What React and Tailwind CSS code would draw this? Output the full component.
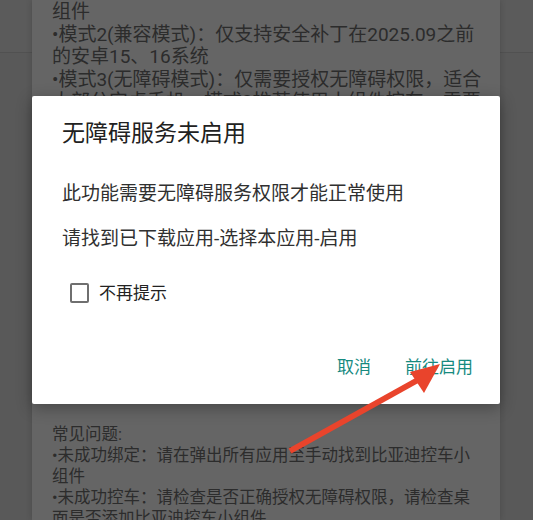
// Accessibility-service prompt shown over the mode/FAQ page (dimmed behind the dialog).

const topLines = [
  '组件',
  '•模式2(兼容模式)：仅支持安全补丁在2025.09之前',
  '的安卓15、16系统',
  '•模式3(无障碍模式)：仅需要授权无障碍权限，适合',
  '大部分安卓手机，模式3推荐使用小组件控车，需要',
];

const faqLines = [
  '常见问题:',
  '•未成功绑定：请在弹出所有应用至手动找到比亚迪控车小',
  '组件',
  '•未成功控车：请检查是否正确授权无障碍权限，请检查桌',
  '面是否添加比亚迪控车小组件',
];

function Arrow() {
  return (
    <svg className="absolute inset-0 pointer-events-none" width="533" height="520" viewBox="0 0 533 520">
      <line x1="290" y1="451" x2="425" y2="376" stroke="#e9442c" strokeWidth="6" />
      <polygon points="440,364 410,372 424,393" fill="#e9442c" />
    </svg>
  );
}

export default function App() {
  return (
    <div
      className="relative h-[520px] w-[533px] overflow-hidden bg-[linear-gradient(to_bottom,#5b5b5b_52px,#515151_52px,#515151_53px,#595959_53px)]"
      style={{ fontFamily: 'Roboto, "Noto Sans CJK SC", "Noto Sans", sans-serif' }}
    >
      {/* page card (dimmed by the scrim) */}
      <div className="ml-[32px] flex h-full w-[468px] flex-col bg-[#656565] px-5 pt-[1px] text-[#2c2c2c] shadow-[0_0_6px_rgba(0,0,0,0.18)]">
        <div className="text-[19px] leading-[22.5px]">
          {topLines.map((l) => (
            <div key={l} className="whitespace-nowrap">{l}</div>
          ))}
        </div>
        <div className="h-[310px] shrink-0" />
        <div className="text-[16.5px] leading-[21px]">
          {faqLines.map((l) => (
            <div key={l} className="whitespace-nowrap">{l}</div>
          ))}
        </div>
      </div>

      {/* dialog */}
      <div className="absolute left-[32px] top-[96px] flex h-[308px] w-[468px] flex-col rounded-[2px] bg-white pl-[30px] pr-[27px] pt-[23px] shadow-[0_4px_16px_rgba(0,0,0,0.3)]">
        <h2 className="text-[23px] leading-[30px] text-[#212121]">无障碍服务未启用</h2>
        <p className="mt-[32px] text-[19px] leading-[26px] text-[#303030]">此功能需要无障碍服务权限才能正常使用</p>
        <p className="mt-[19px] text-[19px] leading-[26px] text-[#303030]">请找到已下载应用-选择本应用-启用</p>
        <label className="ml-[8px] mt-[29px] flex h-[24px] items-center gap-[10px]">
          <span className="h-[20px] w-[19px] rounded-[2px] border-2 border-[#6f6f6f]" />
          <span className="text-[17px] leading-[24px] text-[#222]">不再提示</span>
        </label>
        <div className="mt-[50px] flex justify-end gap-[34px] text-[17px] leading-[24px] text-[#168a7f]">
          <span>取消</span>
          <span>前往启用</span>
        </div>
      </div>

      <Arrow />
    </div>
  );
}
